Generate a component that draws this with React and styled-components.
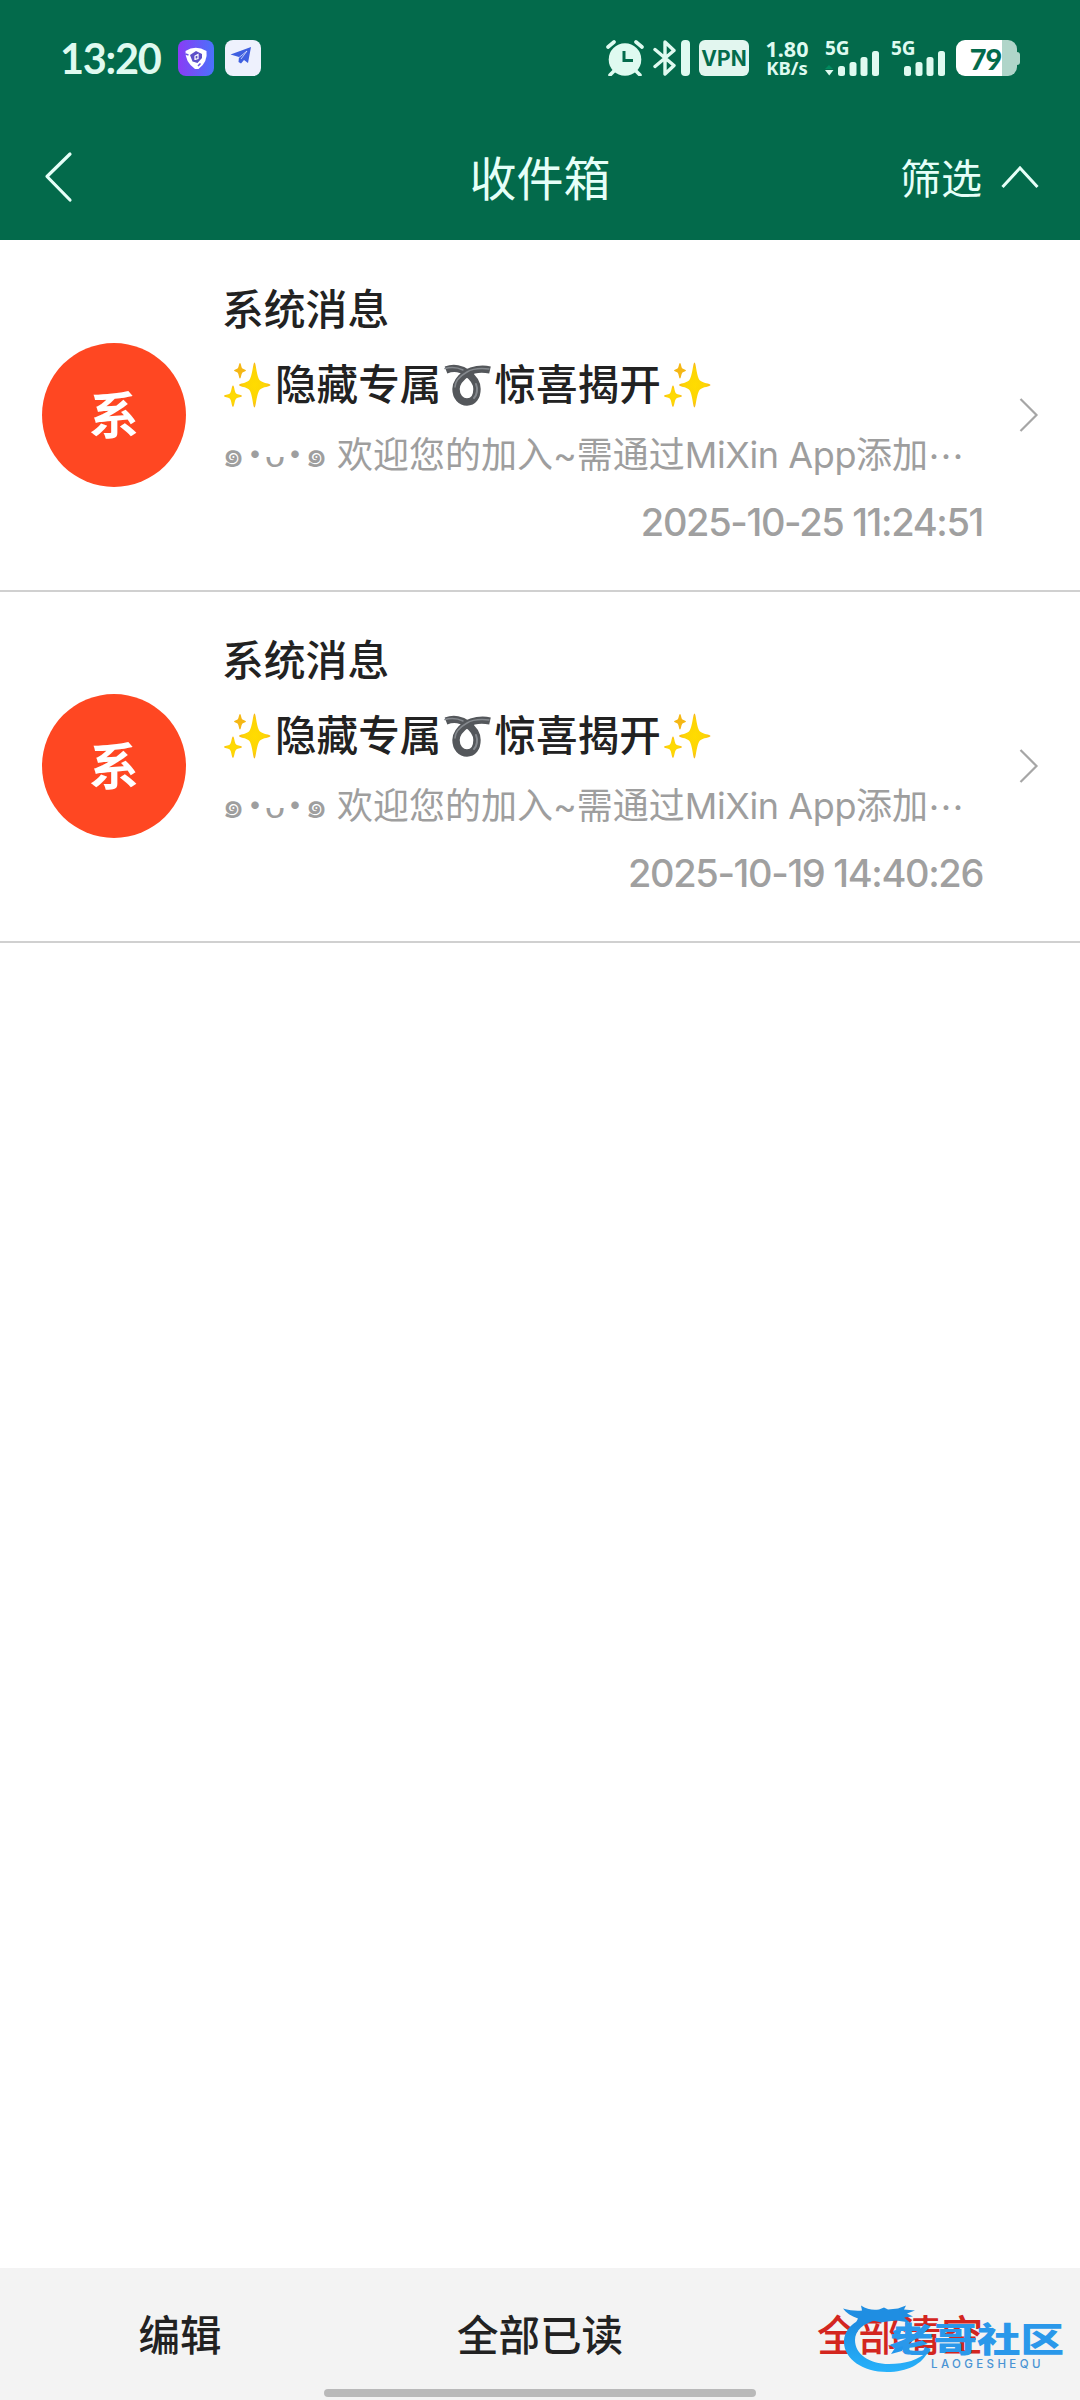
import React from 'react'
import styled, { createGlobalStyle } from 'styled-components';

const messages = [
  { id: 1, date: '2025-10-25 11:24:51' },
  { id: 2, date: '2025-10-19 14:40:26' },
];

const Signal = ({ data }) => (
  <SignalBox>
    <span>5G</span>
    <svg width='55' height='25' viewBox='0 0 55 25'>
      {data && <path d='M5 14l4 4H1z' fill='#008a5e' />}
      {data && <path d='M1 19h8.500l-4.250 5.500z' fill='#dffaf0' />}
      <g fill='#dffaf0'>
        <rect x='14' y='15' width='7' height='10' rx='2.500' />
        <rect x='25.500' y='11' width='7' height='14' rx='2.500' />
        <rect x='36.500' y='6' width='7' height='19' rx='2.500' />
        <rect x='48' y='0' width='7' height='25' rx='2.500' />
      </g>
    </svg>
  </SignalBox>
)

const StatusBar = () => (
  <Status>
    <Clock>13:20</Clock>
    <svg width='36' height='36' viewBox='0 0 36 36'>
      <defs>
        <linearGradient id='shield' x1='0' y1='0' x2='1' y2='0'>
          <stop offset='0' stopColor='#8a3cf5' />
          <stop offset='1' stopColor='#4a72fb' />
        </linearGradient>
      </defs>
      <rect width='36' height='36' rx='8' fill='url(#shield)' />
      <path d='M7.500 11q10-6.500 21 0q1.500 11-8 18h-3.500q-10-7-9.500-18z' fill='#fff' />
      <path d='M12 15l6-4 6 3v4l-4.500 5-5-1.500z' fill='#5d50c8' />
      <path d='M17 20v-4l3-1.500v4l-3 1' fill='none' stroke='#fff' strokeWidth='1.200' />
      <path d='M7.500 14l3 1M20 26l2.500-2.500' stroke='#6a55e6' strokeWidth='1.500' />
    </svg>
    <svg width='36' height='36' viewBox='0 0 36 36'>
      <rect width='36' height='36' rx='8' fill='#eef1fd' />
      <path d='M5.500 14.500L26 7l-3 16-4-3-3 3.500-2.500-1.500.5-5z' fill='#3f5fe0' />
      <path d='M14 17.500l8-6.500-6 8' fill='none' stroke='#eef1fd' strokeWidth='.7' />
    </svg>
    <StatusIcons>
      <svg width='38' height='36' viewBox='0 0 38 36'>
        <circle cx='19' cy='19.500' r='16.300' fill='#dffaf0' />
        <path d='M2 7l6-5M36 7l-6-5M8 31l-4 4M30 31l4 4' stroke='#dffaf0' strokeWidth='3.600' strokeLinecap='round' />
        <path d='M18 11v9.500h9' fill='none' stroke='#046b4c' strokeWidth='3' />
      </svg>
      <Bluetooth width='37' height='36' viewBox='0 0 37 36'>
        <path d='M2 9.500L21 25.500l-9 8.500V2l9 8.500L2 26.500' fill='none' stroke='#dffaf0' strokeWidth='3.400' strokeLinejoin='round' strokeLinecap='round' />
        <rect x='28' width='9' height='36' rx='4' fill='#dffaf0' />
      </Bluetooth>
      <Vpn>VPN</Vpn>
      <Speed>
        <b>1.80</b>
        <i>KB/s</i>
      </Speed>
      <Signal data />
      <Signal />
      <Battery>
        <BatteryBody>79</BatteryBody>
        <BatteryTip />
      </Battery>
    </StatusIcons>
  </Status>
)

const Sparkles = () => (
  <Emoji>
    <svg width='48' height='48' viewBox='0 0 48 48'>
      <defs>
        <radialGradient id='star'>
          <stop offset='0' stopColor='#ffdc00' />
          <stop offset='.7' stopColor='#fdd406' />
          <stop offset='1' stopColor='#f6b41c' />
        </radialGradient>
      </defs>
      <path d='M31.500 1.500c1.600 0 2 14.500 5.500 18 2.500 2.500 10.500 3 10.500 4.500s-8 2-10.500 4.500c-3.500 3.500-3.900 18-5.500 18s-2-14.500-5.500-18C23.500 26 16 25.500 16 24s7.500-2 10-4.500c3.500-3.500 3.900-18 5.500-18z' fill='url(#star)' />
      <path d='M17 2c1.100 0 1.100 4.300 2.500 5.500 1.100 1 3.500 1.100 3.500 2s-2.400 1.100-3.500 2.100C18.100 13 18.100 17.500 17 17.500s-1.100-4.500-2.500-5.900c-1.100-1-3.500-1.200-3.500-2.100s2.400-1 3.500-2C15.900 6.300 15.900 2 17 2z' fill='#f5b714' />
      <path d='M10 24.500c1.300 0 1.400 6.300 3.200 8 1.400 1.300 5.800 1.500 5.800 2.500s-4.400 1.200-5.800 2.600c-1.800 1.800-1.900 8.400-3.200 8.400s-1.400-6.600-3.200-8.400C5.400 36.200 1 36 1 35s4.400-1.200 5.800-2.500c1.800-1.700 1.900-8 3.200-8z' fill='url(#star)' />
    </svg>
  </Emoji>
)

const Loop = () => (
  <Emoji>
    <svg width='50' height='42' viewBox='0 0 50 42'>
      <path d='M3 6c8-3 16-1 21 3 7 5 10 10 10 16 0 8-4 13-10 13s-11-5-11-13c0-6 4-11 11-16 5-3 14-5 23-3' fill='none' stroke='#54575b' strokeWidth='7.400' />
      <path d='M2 4.500c7-2 13-1 18 1.500M12 23c0-6 5-11 12-15 5-3 13-4 22-3' fill='none' stroke='#85898e' strokeWidth='1.500' strokeLinecap='round' />
      <path d='M33 20c2 5 1 11-2 14' fill='none' stroke='#85898e' strokeWidth='2' strokeLinecap='round' />
    </svg>
  </Emoji>
)

const Message = ({ date }) => (
  <Row>
    <Avatar>系</Avatar>
    <Body>
      <Sender>系统消息</Sender>
      <Subject><Sparkles />隐藏专属<Loop />惊喜揭开<Sparkles /></Subject>
      <Preview>
        <Face>๑<i>•</i>ᴗ<i>•</i>๑</Face>
        <span>欢迎您的加入~需通过<em>MiXin App</em>添加</span>
        <Dots>…</Dots>
      </Preview>
      <DateText>{date}</DateText>
    </Body>
    <svg width='20' height='36' viewBox='0 0 20 36'>
      <path d='M1.500 2l16 16-16 16' fill='none' stroke='#a6a6a6' strokeWidth='2.200' />
    </svg>
  </Row>
)

const Watermark = () => (
  <Mark>
    <svg width='96' height='74' viewBox='0 0 96 74'>
      <defs>
        <linearGradient id='dragon' x1='0' y1='0' x2='0' y2='1'>
          <stop offset='0' stopColor='#1b86dc' />
          <stop offset='1' stopColor='#27b2fb' />
        </linearGradient>
      </defs>
      <path d='M32 10C12 15 1 25 1 38c0 17 19 30 43 30 20 0 36-8 41-21-9 9-23 13-39 13-20 0-34-10-34-24 0-9 8-17 22-20z' fill='url(#dragon)' />
      <path d='M0 4.500c7 2 13 2.500 19 2l-1-5c6 4 12 5 18 4l5-2 4 2 10-1 8-3-2 4 11 1-8 3 6 3-9 1 6 5-14-2-9 1-6 1-8-2-10 3-9 3 4-8C8 12 3 9 0 4.500z' fill='#1f8ee2' />
      <path d='M62 16l6 5-5 3zM50 27l9-3-2 7 9 2-12 3zM46 41l18-2-5 8-11 3 4-6z' fill='#2196ec' />
    </svg>
    <MarkText>
      <b>老哥社区</b>
      <small>LAOGESHEQU</small>
    </MarkText>
  </Mark>
)

const App = () => {
  return (
    <Page>
      <GlobalStyle />
      <Header>
        <StatusBar />
        <NavBar>
          <svg width='30' height='52' viewBox='0 0 30 52'>
            <path d='M27 3L4 25.500 27 49' fill='none' stroke='#e6fff8' strokeWidth='3.200' strokeLinecap='round' strokeLinejoin='round' />
          </svg>
          <h1>收件箱</h1>
          <Filter>
            <span>筛选</span>
            <svg width='38' height='24' viewBox='0 0 38 24'>
              <path d='M1.500 22L19 3l17.500 19' fill='none' stroke='#e6fff8' strokeWidth='3' />
            </svg>
          </Filter>
        </NavBar>
      </Header>
      <List>
        {messages.map((m) => <Message key={m.id} date={m.date} />)}
      </List>
      <Footer>
        <Action>编辑</Action>
        <Action>全部已读</Action>
        <Action $danger>全部清空</Action>
        <HomeBar />
        <Watermark />
      </Footer>
    </Page>
  )
}

export default App;

const GlobalStyle = createGlobalStyle`
    * {
        box-sizing: border-box;
    }
    body {
        margin: 0;
        background: #fff;
        font-family: Inter, 'Noto Sans CJK SC', sans-serif;
        color: #222;
    }
    svg {
        display: block;
        flex-shrink: 0;
    }
`

const Page = styled.div`
    width: 1080px;
    height: 2400px;
    display: flex;
    flex-direction: column;
    overflow: hidden;
`

const Header = styled.header`
    height: 240px;
    background: #036a4b;
    color: #e6fff8;
`

const Status = styled.div`
    height: 116px;
    padding: 0 60px 0 60px;
    display: flex;
    align-items: center;
    color: #dffaf0;
    & > svg {
        margin-right: 11px;
    }
`

const Clock = styled.div`
    width: 118px;
    font-family: Lato, sans-serif;
    font-size: 41.500px;
    font-weight: 700;
    line-height: 38px;
    letter-spacing: -1.300px;
    white-space: nowrap;
`

const StatusIcons = styled.div`
    margin-left: auto;
    display: flex;
    align-items: center;
    height: 36px;
`

const Bluetooth = styled.svg`
    margin-left: 9px;
`

const Vpn = styled.div`
    width: 50px;
    height: 36px;
    margin-left: 9px;
    border-radius: 6px;
    background: #e2f6ef;
    color: #046b4c;
    font-size: 21px;
    font-weight: 700;
    line-height: 37px;
    text-align: center;
`

const Speed = styled.div`
    width: 60px;
    margin: 0 7px 0 8px;
    font-family: 'Noto Sans', sans-serif;
    text-align: center;
    b, i {
        display: block;
        font-style: normal;
        font-weight: 700;
        white-space: nowrap;
    }
    b {
        font-size: 21.500px;
        line-height: 19px;
    }
    i {
        font-size: 18.500px;
        line-height: 20px;
    }
`

const SignalBox = styled.div`
    width: 55px;
    height: 36px;
    margin-right: 11px;
    display: flex;
    flex-direction: column;
    justify-content: space-between;
    span {
        height: 11px;
        margin-left: 1px;
        font-family: 'Noto Sans', sans-serif;
        font-size: 19px;
        font-weight: 700;
        line-height: 16px;
    }
`

const Battery = styled.div`
    display: flex;
    align-items: center;
`

const BatteryBody = styled.div`
    width: 61px;
    height: 36px;
    padding-right: 2px;
    border-radius: 9px;
    background: linear-gradient(90deg, #fff 46px, #b0d5c9 46px);
    color: #046b4c;
    font-family: Lato, sans-serif;
    font-size: 29px;
    font-weight: 900;
    line-height: 37px;
    letter-spacing: -1px;
    text-align: center;
`

const BatteryTip = styled.div`
    width: 3px;
    height: 13px;
    border-radius: 0 3px 3px 0;
    background: #b0d5c9;
`

const NavBar = styled.div`
    height: 124px;
    padding: 0 41px 2px 43px;
    display: flex;
    align-items: center;
    justify-content: space-between;
    h1 {
        margin: 3px 0 0 107px;
        width: 400px;
        text-align: center;
        font-size: 47px;
        font-weight: 400;
        line-height: 60px;
    }
`

const Filter = styled.div`
    display: flex;
    align-items: center;
    gap: 19px;
    font-size: 41px;
    line-height: 60px;
    span {
        margin-top: 3px;
    }
`

const List = styled.main`
    flex: 1;
    padding-top: 1px;
`

const Row = styled.div`
    height: 351px;
    padding: 0 41px 1px 42px;
    display: flex;
    align-items: center;
    border-bottom: 2px solid #d0d0d0;
`

const Avatar = styled.div`
    width: 144px;
    height: 144px;
    border-radius: 50%;
    background: #ff4722;
    color: #fff;
    font-size: 50px;
    font-weight: 700;
    line-height: 146px;
    text-align: center;
`

const Body = styled.div`
    width: 761px;
    margin: 0 36px 0 36px;
    white-space: nowrap;
`

const Sender = styled.div`
    height: 75px;
    font-size: 41.800px;
    font-weight: 500;
    line-height: 74px;
`

const Subject = styled.div`
    display: flex;
    align-items: center;
    height: 74px;
    font-size: 41.600px;
    font-weight: 500;
    line-height: 74px;
`

const Emoji = styled.span`
    width: 51px;
    display: flex;
    &:first-child {
        width: 52px;
        margin-left: 1px;
    }
    &:not(:first-child) {
        margin-left: 2px;
    }
`

const Preview = styled.div`
    display: flex;
    height: 67px;
    font-size: 36px;
    line-height: 67px;
    color: #9e9e9e;
    em {
        font-style: normal;
        letter-spacing: -.400px;
    }
`

const Face = styled.span`
    width: 115px;
    display: flex;
    line-height: 65px;
    i {
        width: 20px;
        font-size: 24px;
        font-style: normal;
        line-height: 62px;
        text-align: center;
    }
`

const Dots = styled.span`
    font-family: 'Noto Sans CJK SC', sans-serif;
`

const DateText = styled.div`
    height: 68px;
    font-size: 38px;
    font-weight: 500;
    line-height: 67px;
    letter-spacing: -1.350px;
    text-align: right;
    color: #a0a0a0;
`

const Footer = styled.footer`
    position: relative;
    height: 132px;
    display: flex;
    background: #f3f3f3;
`

const Action = styled.div`
    flex: 1;
    color: ${({ $danger }) => ($danger ? '#d3261f' : '#222')};
    font-size: 41.500px;
    font-weight: 500;
    line-height: 137px;
    text-align: center;
`

const HomeBar = styled.div`
    position: absolute;
    left: 324px;
    bottom: 3px;
    width: 432px;
    height: 8px;
    border-radius: 4px;
    background: #b9b9b9;
`

// community logo floating above the last action
const Mark = styled.div`
    position: absolute;
    left: 843px;
    top: 36px;
    display: flex;
`

const MarkText = styled.div`
    margin: 18px 0 0 -49px;
    width: 175px;
    b {
        display: block;
        width: 136px;
        font-size: 34px;
        font-weight: 900;
        line-height: 36px;
        white-space: nowrap;
        transform: scaleX(1.28);
        transform-origin: left;
        color: #2a98ea;
    }
    small {
        display: block;
        margin-left: 41px;
        font-size: 11.500px;
        font-weight: 500;
        line-height: 12px;
        letter-spacing: 3.400px;
        color: #4a94d4;
    }
`
